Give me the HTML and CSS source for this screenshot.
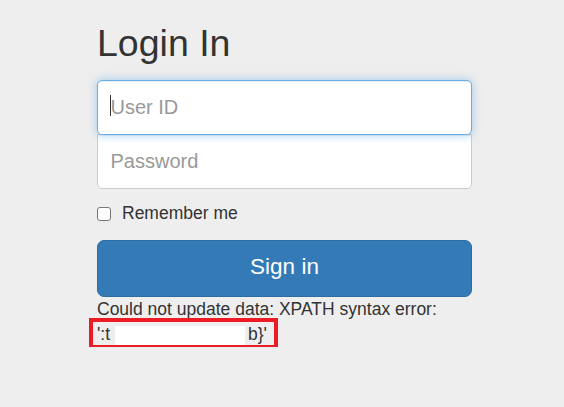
FILE: index.html
```html
<!DOCTYPE html>
<html lang="en">
<head>
    <meta charset="UTF-8">
    <meta name="viewport" content="width=device-width, initial-scale=1.0">
    <title>Login In</title>
    <link rel="stylesheet" href="styles.css">
</head>
<body>

    <form class="form-signin" onsubmit="return false;">
        <h2 class="form-signin-heading">Login In</h2>
        <div class="field field-focused">
            <input type="text" id="userId" class="form-control is-focused" placeholder="User ID">
        </div>
        <div class="field">
            <input type="password" id="password" class="form-control" placeholder="Password">
        </div>

        <label class="checkbox">
            <input type="checkbox" value="remember-me">
            <span>Remember me</span>
        </label>

        <button class="btn-signin" type="submit">Sign in</button>

        <p class="error">
            Could not update data: XPATH syntax error:<br>
            ':t <span class="redacted"></span>b}'
            <span class="highlight"></span>
        </p>
    </form>

</body>
</html>
```

FILE: styles.css
```css
/* General Styles */
body {
    font-family: 'Liberation Sans', Arial, sans-serif;
    background-color: #eeeeee;
    color: #333333;
    margin: 0;
}

.form-signin {
    width: 375px;
    margin-left: 97px;
}

/* Heading */
.form-signin-heading {
    font-size: 37.5px;
    font-weight: normal;
    line-height: 41px;
    margin: 23px 0 16px;
    color: #333333;
}

/* Inputs */
.field {
    position: relative;
}

.field-focused {
    margin-bottom: -1px;
    z-index: 2;
}

/* text caret of the focused field */
.field-focused::after {
    content: '';
    position: absolute;
    left: 13px;
    top: 15px;
    width: 1px;
    height: 21px;
    background: #333;
}

.form-control {
    display: block;
    width: 100%;
    height: 55px;
    padding: 0 12.5px;
    font-family: inherit;
    font-size: 20px;
    color: #555555;
    background-color: #fff;
    border: 1px solid #cccccc;
    border-radius: 5px;
    box-sizing: border-box;
    box-shadow: inset 0 1px 1px rgba(0, 0, 0, 0.075);
    outline: none;
}

.form-control::placeholder {
    color: #999999;
}

#password {
    border-top-left-radius: 0;
    border-top-right-radius: 0;
}

.form-control.is-focused,
.form-control:focus {
    border-color: #66afe9;
    box-shadow: inset 0 1px 1px rgba(0, 0, 0, 0.075), 0 0 10px rgba(102, 175, 233, 0.6);
}

/* Remember me */
.checkbox {
    display: flex;
    align-items: center;
    gap: 11px;
    margin: 12px 0 14px;
    font-size: 17.5px;
    line-height: 25px;
}

.checkbox input {
    appearance: none;
    -webkit-appearance: none;
    width: 14px;
    height: 14px;
    margin: 0;
    background: #fff;
    border: 1px solid #767676;
    border-radius: 3px;
}

/* Button */
.btn-signin {
    display: block;
    width: 100%;
    height: 57px;
    padding: 0 0 3px;
    font-family: inherit;
    font-size: 22.5px;
    color: #fff;
    background-color: #337ab7;
    border: 1px solid #2e6da4;
    border-radius: 7px;
    cursor: pointer;
}

/* Error message */
.error {
    position: relative;
    margin: 0;
    font-size: 17.5px;
    line-height: 25px;
}

.redacted {
    display: inline-block;
    width: 130px;
    height: 19px;
    margin-right: 3px;
    vertical-align: -5px;
    background: #fff;
}

.highlight {
    position: absolute;
    left: -8px;
    top: 21px;
    width: 189px;
    height: 31px;
    border: 4px solid #ed1c24;
    box-sizing: border-box;
}
```
